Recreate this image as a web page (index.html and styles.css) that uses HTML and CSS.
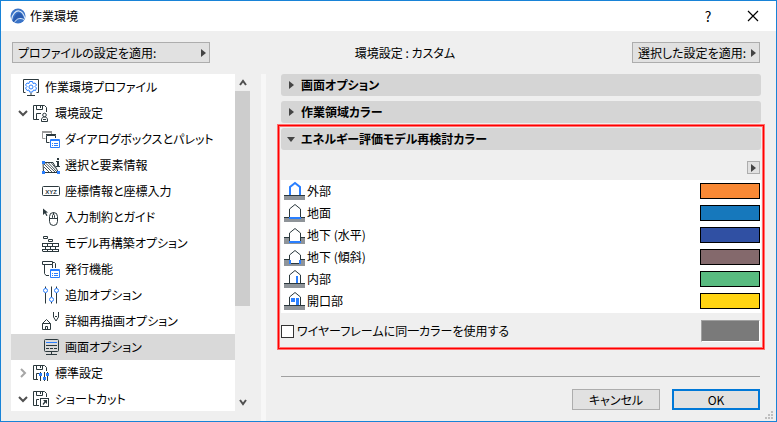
FILE: index.html
```html
<!DOCTYPE html>
<html lang="ja">
<head>
  <meta charset="UTF-8">
  <meta name="viewport" content="width=device-width, initial-scale=1.0">
  <title>作業環境</title>
  <link rel="stylesheet" href="styles.css">
</head>
<body>
  <div class="dialog">
    <!-- Title bar -->
    <header class="titlebar">
      <svg class="app-icon" width="16" height="16" viewBox="0 0 16 16">
        <circle cx="8" cy="8" r="7.500" fill="#3a74c8"/>
        <path d="M1.500 12C2 6 6 2.500 9 3C12 3.500 14 7 15 10.500" fill="none" stroke="#dbe8f8" stroke-width="1.200"/>
        <path d="M3 13.500C4 8 6.500 5 9 5C11.500 5 13 8 14 11C10 8.500 6.500 10 4.500 14.500Z" fill="#2a5cb0"/>
        <path d="M4.500 14.500C6.500 10.500 10 9.500 14 11.500" fill="none" stroke="#dbe8f8"/>
      </svg>
      <h1>作業環境</h1>
      <button class="title-btn" type="button" aria-label="ヘルプ">?</button>
      <button class="title-btn" type="button" aria-label="閉じる">
        <svg width="12" height="12" viewBox="0 0 12 12"><path d="M1 1L11 11M11 1L1 11" stroke="#000" stroke-width="1.200"/></svg>
      </button>
    </header>

    <div class="toolbar">
      <button class="btn menu-btn profile-btn" type="button"><span>プロファイルの設定を適用:</span><i class="arrow"></i></button>
      <p>環境設定 : カスタム</p>
      <button class="btn menu-btn apply-btn" type="button"><span>選択した設定を適用:</span><i class="arrow"></i></button>
    </div>

    <div class="main">
      <!-- Settings tree -->
      <nav class="sidebar">
        <ul class="tree">
          <li class="level0">
            <svg class="icon" viewBox="0 0 20 20">
              <path d="M3.500 15.500h-2v-13h15v13h-2M9 15.500v3M5 18.500h8"/>
              <path class="blue" d="M7.500 4.500h3l.5 2 2-.5 1.500 2-1.500 1.500 1.500 1.500-1 2.500-2-.5-1 2h-3l-.5-2-2 .5-1.500-2.500 1.500-1.500-1.500-1.500 1.500-2 2 .5Z"/>
              <circle class="blue" cx="9" cy="10" r="2"/>
            </svg>
            <a href="#">作業環境プロファイル</a>
          </li>
          <li class="level1">
            <svg class="chevron" viewBox="0 0 10 10"><path d="M1 3l4 4 4-4"/></svg>
            <svg class="icon" viewBox="0 0 20 20">
              <path d="M7 16.500H1.500v-14h11l2 2V9M4.500 2.500v4h6v-4M8.500 3v2M4.500 16.500v-6H9"/>
              <circle cx="12.500" cy="12" r="1.800"/>
              <path d="M9.500 18.500v-1.500c0-2 1-3 3-3s3 1 3 3v1.500ZM11 16.500h3"/>
            </svg>
            <a href="#">環境設定</a>
          </li>
          <li class="level2">
            <svg class="icon" viewBox="0 0 20 20">
              <path class="gray" d="M3.500 9.500h-3v-6h9V5M0 3.500h10"/>
              <path class="gray" d="M0 2.500h10"/>
              <path d="M7.500 13.500h-3v-7h9V9M4 5.500h10"/>
              <path class="blue" d="M8.500 10.500h9v8h-9ZM8.500 11.500h9M10 14.500h1M12 14.500h4M10 16.500h1M12 16.500h4"/>
            </svg>
            <a href="#">ダイアログボックスとパレット</a>
          </li>
          <li class="level2">
            <svg class="icon" viewBox="0 0 20 20">
              <path d="M1 7.500h10l5.500 10H1.500Z"/>
              <path class="hatch" d="M2 9l8 8M2 12l5 5M3 7.500l10 9.500M6 7.500l9 9.500M9 7.500l5 6"/>
              <path class="dark-fill" d="M15 3h2v2h-2zM14 6h3v5h1v1h-4v-1h1V7h-1z"/>
              <path class="blue-fill" d="M0 6h3v3H0zM0 16h3v3H0zM15 16h3v3h-3z"/>
            </svg>
            <a href="#">選択と要素情報</a>
          </li>
          <li class="level2">
            <svg class="icon" viewBox="0 0 20 20">
              <rect x=".5" y="5.500" width="17" height="9" rx="1"/>
              <text x="9" y="12.500" text-anchor="middle">XYZ</text>
            </svg>
            <a href="#">座標情報と座標入力</a>
          </li>
          <li class="level2">
            <svg class="icon" viewBox="0 0 20 20">
              <path class="dark-fill" d="M1 1.500l5 4-2 .3 1.500 2.700-1.200.5-1.300-2.700L1 8Z"/>
              <rect x="7.500" y="5.500" width="8" height="13" rx="4"/>
              <path d="M7.500 11.500h8M11.500 5.500V8"/>
              <rect x="10.500" y="7.500" width="2" height="4" rx="1" fill="#fff"/>
            </svg>
            <a href="#">入力制約とガイド</a>
          </li>
          <li class="level2">
            <svg class="icon" viewBox="0 0 20 20">
              <path d="M1.500 3.500h4v2h-4zM6.500 6.500h4v2h-4zM0 10.500h17M0 13.500h17M0 16.500h17M1 18.500h16M.5 10.500v3M5.500 10.500v3M10.500 10.500v3M16.500 10.500v3M3.500 13.500v3M8.500 13.500v3M13.500 13.500v3M.5 16.500v2M5.500 16.500v2M10.500 16.500v2M16.500 16.500v2"/>
            </svg>
            <a href="#">モデル再構築オプション</a>
          </li>
          <li class="level2">
            <svg class="icon" viewBox="0 0 20 20">
              <path d="M.5 2.500h10v3H.5zM2.500 5.500v9l1.500 2H7M10.500 5.500V9M10.500 3.500h2l1 1V9"/>
              <path class="blue" d="M8.500 10.500h9v8h-9ZM8.500 11.500h9M10 14.500h1M12 14.500h4M10 16.500h1M12 16.500h4"/>
            </svg>
            <a href="#">発行機能</a>
          </li>
          <li class="level2">
            <svg class="icon" viewBox="0 0 20 20">
              <path d="M3.500 1.500v2M3.500 8v10.500M9.500 1.500V12M9.500 17v1.500M14.500 1.500v2M14.500 8v10.500"/>
              <circle class="blue" cx="3.500" cy="5.500" r="2"/>
              <circle class="blue" cx="9.500" cy="14.500" r="2"/>
              <circle class="blue" cx="14.500" cy="5.500" r="2"/>
            </svg>
            <a href="#">追加オプション</a>
          </li>
          <li class="level2">
            <svg class="icon" viewBox="0 0 20 20">
              <path d="M.5 12.500l4-4 4 4v6h-8ZM.5 12.500h8M3.500 18.500v-3h2v3"/>
              <path d="M11.500 1v5l2.500 4 2.500-4V1M13 6l1-1 1 1"/>
            </svg>
            <a href="#">詳細再描画オプション</a>
          </li>
          <li class="level2 selected">
            <svg class="icon" viewBox="0 0 20 20">
              <rect x="2.500" y="2.500" width="14" height="12" rx="1"/>
              <path class="blue" d="M4 5.500h11"/>
              <path d="M4 8.500h11M4 11.500h3M8 11.500h3M12 11.500h3M9.500 14.500v3M4 17.500h11"/>
            </svg>
            <a href="#">画面オプション</a>
          </li>
          <li class="level1">
            <svg class="chevron closed" viewBox="0 0 10 10"><path d="M3 1l4 4-4 4"/></svg>
            <svg class="icon" viewBox="0 0 20 20">
              <path d="M6 16.500H1.500v-14h11l2 2V8M4.500 2.500v4h6v-4M8.500 3v2M4.500 16.500v-6H7M8.500 9v9M12.500 9v9M15.500 9v9"/>
              <path class="blue-fill" d="M7 10h3v3H7zM11 14h3v3h-3zM14 10h3v3h-3z"/>
            </svg>
            <a href="#">標準設定</a>
          </li>
          <li class="level1">
            <svg class="chevron" viewBox="0 0 10 10"><path d="M1 3l4 4 4-4"/></svg>
            <svg class="icon" viewBox="0 0 20 20">
              <path d="M7 16.500H1.500v-14h11l2 2V8M4.500 2.500v4h6v-4M8.500 3v2M4.500 16.500v-6H7"/>
              <rect x="8.500" y="9.500" width="8" height="8"/>
              <path class="dark-fill" d="M11 11h4v4l-1.500-1.500L11.500 16l-1-1 2-2.500Z"/>
            </svg>
            <a href="#">ショートカット</a>
          </li>
        </ul>
        <div class="scrollbar">
          <svg class="chevron" viewBox="0 0 10 10"><path d="M2 7l3-4 3 4"/></svg>
          <div class="track"><div class="thumb"></div></div>
          <svg class="chevron" viewBox="0 0 10 10"><path d="M2 3l3 4 3-4"/></svg>
        </div>
      </nav>

      <div class="splitter"></div>

      <!-- Option panels -->
      <main class="content">
        <button class="panel-head" type="button" aria-expanded="false"><i class="arrow"></i>画面オプション</button>
        <button class="panel-head" type="button" aria-expanded="false"><i class="arrow"></i>作業領域カラー</button>

        <section class="panel">
          <button class="panel-head" type="button" aria-expanded="true"><i class="arrow down"></i>エネルギー評価モデル再検討カラー</button>
          <div class="panel-tools">
            <button class="small-btn" type="button" aria-label="メニュー"><i class="arrow"></i></button>
          </div>
          <ul class="colors">
            <li>
              <svg class="house" viewBox="0 0 21 20">
                <path class="ground" d="M0 15h21v4H0z"/><path class="line" d="M0 14.500h21"/>
                <path class="thick" d="M6 14V6l5-4 5 4v8"/>
              </svg>
              <span>外部</span>
              <button class="swatch orange" type="button" aria-label="外部"></button>
            </li>
            <li>
              <svg class="house" viewBox="0 0 21 20">
                <path class="ground" d="M0 15h21v4H0z"/><path class="line" d="M0 14.500h5M16 14.500h5"/>
                <path class="wall" d="M5.500 15V6l5.500-4.500L16.500 6v9"/>
                <path class="thick" d="M5 15h12"/>
              </svg>
              <span>地面</span>
              <button class="swatch blue-color" type="button" aria-label="地面"></button>
            </li>
            <li>
              <svg class="house" viewBox="0 0 21 20">
                <path class="ground" d="M0 13h21v6H0z"/><path class="line" d="M0 12.500h21"/>
                <path class="wall" d="M5.500 17V8l5.500-4.500L16.500 8v9"/>
                <path class="thick" d="M5 17h12"/>
              </svg>
              <span>地下 (水平)</span>
              <button class="swatch navy" type="button" aria-label="地下 (水平)"></button>
            </li>
            <li>
              <svg class="house" viewBox="0 0 21 20">
                <path class="ground" d="M0 13h21v6H0z"/><path class="line" d="M0 12.500h21"/>
                <path class="wall" d="M5.500 16.500V8l5.500-4.500L16.500 8v8.500Z"/>
                <path class="thick" d="M6 13v4M16 13v4"/>
              </svg>
              <span>地下 (傾斜)</span>
              <button class="swatch mauve" type="button" aria-label="地下 (傾斜)"></button>
            </li>
            <li>
              <svg class="house" viewBox="0 0 21 20">
                <path class="ground" d="M0 15h21v4H0z"/><path class="line" d="M0 14.500h21"/>
                <path class="wall" d="M5.500 14V6l5.500-4.500L16.500 6v8"/>
                <path class="thick" d="M13 7v7"/>
              </svg>
              <span>内部</span>
              <button class="swatch green" type="button" aria-label="内部"></button>
            </li>
            <li>
              <svg class="house" viewBox="0 0 21 20">
                <path class="ground" d="M0 15h21v4H0z"/><path class="line" d="M0 14.500h21"/>
                <path class="wall" d="M5.500 14V6l5.500-4.500L16.500 6v8"/>
                <path class="blue-fill" d="M7 7h4v4H7zM12 7h3v7h-3z"/>
              </svg>
              <span>開口部</span>
              <button class="swatch yellow" type="button" aria-label="開口部"></button>
            </li>
          </ul>
          <div class="wireframe">
            <input type="checkbox" id="wireframe">
            <label for="wireframe">ワイヤーフレームに同一カラーを使用する</label>
            <button class="wire-color" type="button" aria-label="ワイヤーフレームカラー"></button>
          </div>
        </section>

        <footer class="actions">
          <button class="btn" type="button">キャンセル</button>
          <button class="btn primary" type="button">OK</button>
        </footer>
      </main>
    </div>

    <svg class="grip" width="8" height="8" viewBox="0 0 8 8"><path d="M6 0h2v2H6zM3 3h2v2H3zM6 3h2v2H6zM0 6h2v2H0zM3 6h2v2H3zM6 6h2v2H6z" fill="#bfbfbf"/></svg>
  </div>
</body>
</html>
```
FILE: styles.css
```css
* {
  box-sizing: border-box;
}

body {
  margin: 0;
  font-family: "Noto Sans CJK JP", sans-serif;
  font-size: 12px;
  line-height: 20px;
  font-feature-settings: "palt";
  color: #000;
}

button {
  font: inherit;
  font-feature-settings: inherit;
  color: inherit;
  padding: 0;
  border: none;
  background: none;
}

ul {
  list-style: none;
  margin: 0;
  padding: 0;
}

a {
  color: inherit;
  text-decoration: none;
}

.dialog {
  position: relative;
  display: flex;
  flex-direction: column;
  height: 100vh;
  border: 1px solid #1883d7;
  background: #efefef;
}

/* Title bar */
.titlebar {
  display: flex;
  align-items: center;
  height: 30px;
  padding: 0 8px 0 9px;
  background: #fff;
}

.titlebar h1 {
  flex: 1;
  margin: 0 0 0 4px;
  font-size: 12px;
  font-weight: normal;
}

.title-btn {
  display: flex;
  align-items: center;
  justify-content: center;
  width: 30px;
  height: 28px;
  margin-left: 15px;
  font-size: 14px;
}

/* Toolbar */
.toolbar {
  display: flex;
  align-items: center;
  height: 43px;
  padding: 0 16px 0 11px;
}

.toolbar p {
  flex: 1;
  margin: 0;
  padding-right: 32px;
  text-align: center;
}

.btn {
  height: 21px;
  line-height: 19px;
  border: 1px solid #adadad;
  background: #e1e1e1;
}

.menu-btn {
  display: flex;
  align-items: center;
  justify-content: space-between;
  padding: 0 3px 0 5px;
}

.profile-btn {
  width: 198px;
}

.apply-btn {
  width: 128px;
}

.arrow {
  display: block;
  border-style: solid;
  border-width: 4px 0 4px 5px;
  border-color: transparent transparent transparent #444;
}

.arrow.down {
  border-width: 5px 4px 0 4px;
  border-color: #444 transparent transparent transparent;
}

.main {
  display: flex;
  flex: 1;
  min-height: 0;
}

/* Tree */
.sidebar {
  display: flex;
  width: 239px;
  margin: 0 11px 10px 10px;
}

.tree {
  flex: 1;
  overflow: hidden;
  background: #fff;
}

.tree li {
  display: flex;
  align-items: center;
  height: 26px;
}

.tree .level0 {
  padding-left: 11px;
}

.tree .level1 {
  padding-left: 7px;
}

.tree .level2 {
  padding-left: 31px;
}

.tree .selected {
  background: #d9d9d9;
}

.icon {
  width: 20px;
  height: 20px;
  margin-right: 3px;
  fill: none;
  stroke: #2b383d;
}

.icon text {
  font: bold 6px "Liberation Sans", sans-serif;
  fill: #2b383d;
  stroke: none;
}

.icon .blue {
  stroke: #2a7fff;
}

.icon .gray {
  stroke: #999;
}

.icon .hatch {
  stroke: #4a555a;
}

.icon .dark-fill {
  fill: #2b383d;
  stroke: none;
}

.blue-fill {
  fill: #2a7fff;
  stroke: none;
}

.chevron {
  width: 10px;
  height: 10px;
  fill: none;
  stroke: #505050;
  stroke-width: 2;
}

.chevron.closed {
  stroke: #a6a6a6;
}

.level1 .chevron {
  margin-right: 4px;
}

.scrollbar {
  display: flex;
  flex-direction: column;
  align-items: center;
  width: 15px;
  padding: 4px 0;
}

.track {
  flex: 1;
  width: 15px;
  margin: 3px 0;
}

.thumb {
  height: 71%;
  background: #cdcdcd;
}

.splitter {
  width: 5px;
  background: #f7f7f7;
}

/* Panels */
.content {
  display: flex;
  flex: 1;
  flex-direction: column;
  gap: 5px;
  padding: 0 15px 11px;
}

.panel-head {
  display: flex;
  flex-shrink: 0;
  align-items: center;
  width: 100%;
  height: 22px;
  padding-left: 8px;
  border-radius: 3px;
  background: #d5d5d5;
  font-weight: bold;
}

.panel-head .arrow {
  margin-right: 7px;
}

.panel-head .arrow.down {
  margin: 0 6px 0 -2px;
}

.panel {
  position: relative;
}

/* red frame around the open panel */
.panel::after {
  content: "";
  position: absolute;
  inset: -3px -3px -2px;
  border: 1px solid #f00;
  box-shadow: 0 0 0 1px #ff7070, inset 0 0 0 1px #ff7070;
  pointer-events: none;
}

.panel-tools {
  display: flex;
  justify-content: flex-end;
  height: 30px;
  padding: 11px 1px 0 0;
}

.small-btn {
  display: flex;
  align-items: center;
  justify-content: center;
  width: 13px;
  height: 13px;
  border: 1px solid #adadad;
  background: #e1e1e1;
}

.colors {
  padding-bottom: 1px;
  background: #fff;
}

.colors li {
  display: flex;
  align-items: center;
  height: 22px;
  padding: 0 1px 0 3px;
}

.colors span {
  flex: 1;
}

.house {
  width: 21px;
  height: 20px;
  margin-right: 2px;
  fill: none;
}

.house .ground {
  fill: #8f9499;
}

.house .line {
  stroke: #2b383d;
}

.house .wall {
  fill: #fff;
  stroke: #2b383d;
}

.house .thick {
  stroke: #2a7fff;
  stroke-width: 2;
}

.house .blue-fill {
  fill: #2a7fff;
}

.swatch {
  width: 60px;
  height: 16px;
  border: 1px solid #000;
}

.orange {
  background: #f98935;
}

.blue-color {
  background: #1678bc;
}

.navy {
  background: #3050a3;
}

.mauve {
  background: #84696c;
}

.green {
  background: #59bb80;
}

.yellow {
  background: #ffd412;
}

.wireframe {
  display: flex;
  align-items: center;
  height: 34px;
  padding: 2px 1px 0 0;
}

.wireframe input {
  appearance: none;
  width: 13px;
  height: 13px;
  margin: 0 3px 0 0;
  border: 1px solid #333;
  background: #fff;
}

.wireframe label {
  flex: 1;
}

.wire-color {
  width: 59px;
  height: 22px;
  border: 1px solid;
  border-color: #a0a0a0 #fff #fff #a0a0a0;
  background: #7a7a7a;
}

/* Bottom buttons */
.actions {
  display: flex;
  justify-content: flex-end;
  gap: 12px;
  margin: auto 1px 0 0;
  padding-top: 12px;
  border-top: 1px solid #a0a0a0;
}

.actions .btn {
  width: 88px;
}

.actions .primary {
  line-height: 17px;
  border: 2px solid #0078d7;
}

.grip {
  position: absolute;
  right: 3px;
  bottom: 2px;
}
```
